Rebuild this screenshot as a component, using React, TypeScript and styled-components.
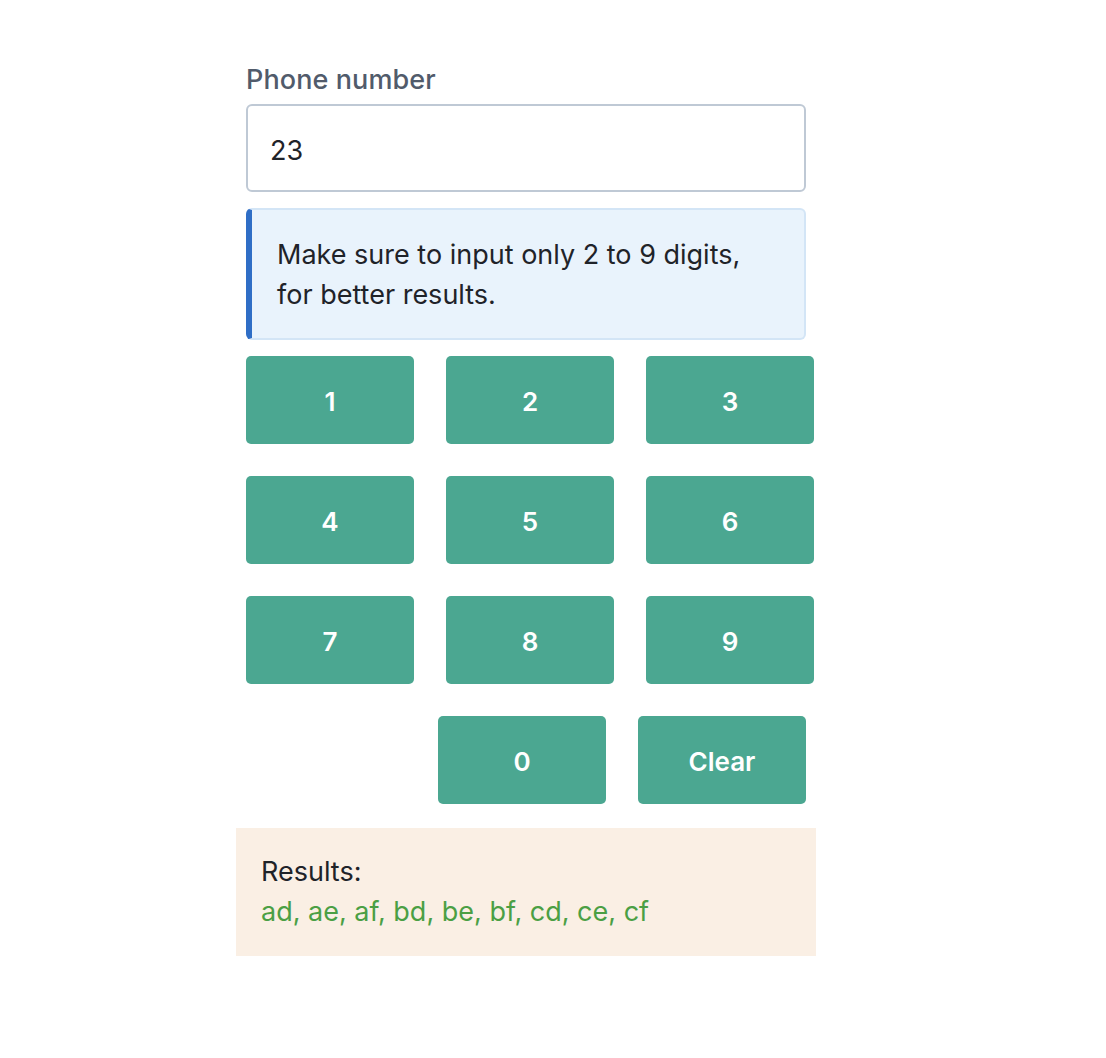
import React from "react";
import styled, { createGlobalStyle } from "styled-components";

const Global = createGlobalStyle`
  html, body { margin: 0; padding: 0; background: #ffffff; }
  body { font-family: Inter, "Noto Sans", sans-serif; color: #1f2329; }
  * { box-sizing: border-box; }
`;

const Page = styled.div`
  padding: 60px 0 0 246px;
`;

const Column = styled.div`
  width: 560px;
  display: flex;
  flex-direction: column;
`;

const Label = styled.label`
  font-size: 27px;
  line-height: 40px;
  font-weight: 500;
  color: #515b6b;
  margin-bottom: 4px;
  letter-spacing: 0.1px;
`;

const Input = styled.input`
  width: 560px;
  height: 88px;
  border: 2px solid #bfc9d5;
  border-radius: 6px;
  padding: 4px 22px 0;
  font-family: Inter, "Noto Sans", sans-serif;
  font-size: 27px;
  color: #1f2329;
  outline: none;
  margin-bottom: 16px;
`;

const Info = styled.div`
  border: 2px solid #d3e5f6;
  border-left: 6px solid #2f6ec6;
  border-radius: 6px;
  background: #e9f3fc;
  padding: 25px 24px 23px 25px;
  font-size: 27px;
  line-height: 40px;
  color: #1f2329;
  margin-bottom: 16px;
`;

const Grid = styled.div`
  display: grid;
  grid-template-columns: repeat(3, 168px);
  column-gap: 32px;
  row-gap: 32px;
  width: 568px;
`;

const LastRow = styled.div`
  display: flex;
  justify-content: flex-end;
  gap: 32px;
  margin-top: 32px;
`;

const Key = styled.button`
  width: 168px;
  height: 88px;
  border: none;
  border-radius: 5px;
  background: #4ba791;
  color: #ffffff;
  font-family: Inter, "Noto Sans", sans-serif;
  font-size: 26px;
  font-weight: 600;
  cursor: pointer;
  padding: 3px 0 0;
`;

const Results = styled.div`
  margin: 24px 0 0 -10px;
  width: 580px;
  background: #faefe4;
  padding: 24px 25px 24px;
  font-size: 27px;
  line-height: 40px;
`;

const ResultsTitle = styled.div`
  color: #1f2329;
`;

const ResultsList = styled.div`
  color: #4b9f44;
`;

export default function App() {
  const keys = ["1", "2", "3", "4", "5", "6", "7", "8", "9"];
  return (
    <>
      <Global />
      <Page>
        <Column>
          <Label htmlFor="phone">Phone number</Label>
          <Input id="phone" defaultValue="23" />
          <Info>
            Make sure to input only 2 to 9 digits,
            <br />
            for better results.
          </Info>
          <Grid>
            {keys.map((k) => (
              <Key key={k}>{k}</Key>
            ))}
          </Grid>
          <LastRow>
            <Key>0</Key>
            <Key>Clear</Key>
          </LastRow>
          <Results>
            <ResultsTitle>Results:</ResultsTitle>
            <ResultsList>ad, ae, af, bd, be, bf, cd, ce, cf</ResultsList>
          </Results>
        </Column>
      </Page>
    </>
  );
}
